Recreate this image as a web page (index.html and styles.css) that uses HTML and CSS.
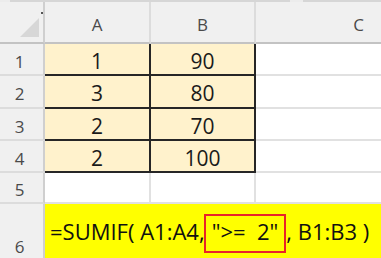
FILE: index.html
```html
<!DOCTYPE html>
<html>
<head>
<meta charset="utf-8">
<link rel="stylesheet" href="styles.css">
</head>
<body>
<div class="strip"><span class="gap first"></span><span class="seg a"></span><span class="gap"></span><span class="seg b"></span></div>
<div class="sheet">
  <div class="hdr corner"><span class="tri"></span><span class="dot"></span></div>
  <div class="hdr col">A</div>
  <div class="hdr col">B</div>
  <div class="hdr col last">C</div>

  <div class="hdr row">1</div>
  <div class="cell data">1</div>
  <div class="cell data">90</div>
  <div class="cell"></div>

  <div class="hdr row">2</div>
  <div class="cell data">3</div>
  <div class="cell data">80</div>
  <div class="cell"></div>

  <div class="hdr row">3</div>
  <div class="cell data">2</div>
  <div class="cell data">70</div>
  <div class="cell"></div>

  <div class="hdr row">4</div>
  <div class="cell data">2</div>
  <div class="cell data">100</div>
  <div class="cell"></div>

  <div class="hdr row">5</div>
  <div class="cell"></div>
  <div class="cell"></div>
  <div class="cell"></div>

  <div class="hdr row bottom">6</div>
  <div class="formula"><span class="ftext">=SUMIF( A1:A4,</span><span class="crit">"&gt;=&nbsp; 2"</span><span class="ftext">, B1:B3 )</span></div>
</div>
</body>
</html>
```

FILE: styles.css
```css
html, body {
  margin: 0;
  padding: 0;
  width: 381px;
  height: 258px;
  overflow: hidden;
  background: #ffffff;
  font-family: "Open Sans", "Noto Sans", sans-serif;
}

.strip {
  display: flex;
  height: 2px;
  background: #efefef;
}
.strip .gap { width: 13px; background: #ececec; }
.strip .gap.first { width: 10px; }
.strip .seg { background: #d6d6d6; }
.strip .seg.a { width: 280px; }
.strip .seg.b { flex: 1; }

.sheet {
  display: grid;
  grid-template-columns: 45px 106px 105px 1fr;
  grid-template-rows: 42px 32px 33px 32px 32px 31px 54px;
  width: 381px;
  overflow: hidden;
}

.sheet > div {
  box-sizing: border-box;
  display: flex;
  align-items: center;
  justify-content: center;
  min-width: 0;
}

.hdr {
  background: #f0f0f0;
  color: #4a4a4a;
  font-size: 17px;
  position: relative;
}
.hdr.col {
  border-right: 2px solid #dcdcdc;
  border-bottom: 2px solid #c3c3c3;
  padding-top: 4px;
}
.hdr.col.last {
  border-right: none;
  justify-content: flex-end;
  padding-right: 17px;
}
.hdr.corner {
  border-right: 2px solid #cfcfcf;
  border-bottom: 2px solid #c3c3c3;
}
.hdr.row {
  border-right: 2px solid #cfcfcf;
  border-bottom: 2px solid #dcdcdc;
  padding-right: 4px;
  padding-top: 4px;
}
.hdr.row.bottom {
  align-items: flex-end;
  padding-bottom: 0;
  border-bottom: none;
}

.tri {
  position: absolute;
  left: 20px;
  top: 16px;
  width: 0;
  height: 0;
  border-left: 19px solid transparent;
  border-bottom: 19px solid #d7d7d7;
}
.dot {
  position: absolute;
  right: 0;
  top: 10px;
  width: 2px;
  height: 2px;
  background: #555555;
}

.cell {
  background: #ffffff;
  border-right: 2px solid #e1e1e1;
  border-bottom: 2px solid #e1e1e1;
}
.cell:nth-child(4n) {
  border-right: none;
}
.cell.data {
  background: #fff2cc;
  border-right: 2px solid #262626;
  border-bottom: 2px solid #262626;
  color: #1a1a1a;
  font-size: 21px;
  padding-top: 3px;
}

.formula {
  grid-column: 2 / 5;
  background: #ffff00;
  justify-content: flex-start !important;
  padding: 0 0 1px 5px;
  font-size: 22px;
  color: #111111;
  white-space: pre;
}
.ftext {
  line-height: 30px;
}
.crit {
  border: 2px solid #e8232a;
  box-sizing: border-box;
  height: 39px;
  margin-top: 5px;
  margin-left: -1px;
  padding: 0 6px 5px 6px;
  line-height: 30px;
}
```
